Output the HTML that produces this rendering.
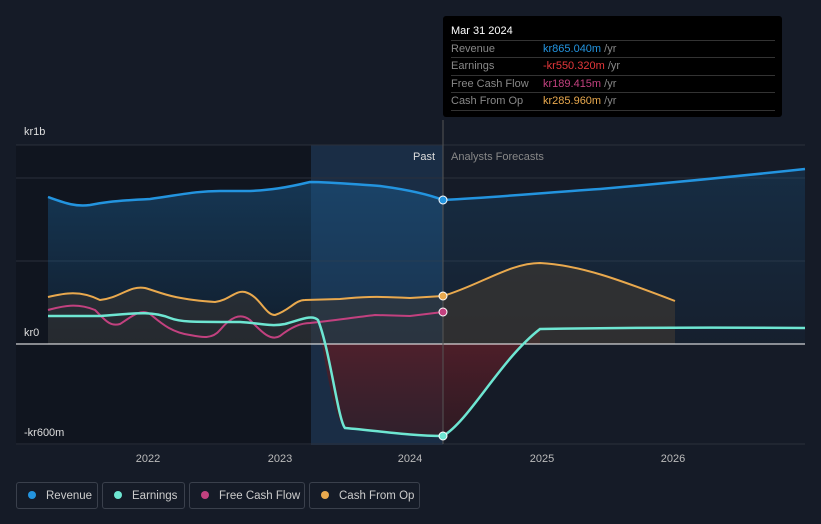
<!DOCTYPE html><html><head><style>
body{margin:0;background:#151b27;font-family:"Liberation Sans",sans-serif;width:821px;height:524px;overflow:hidden;position:relative}
.tip{position:absolute;left:443px;top:16px;width:339px;height:101px;background:#000;border-radius:3px}
.tip .h{color:#fff;font-size:11px;position:absolute;left:8px;top:9px}
.row{position:absolute;left:8px;width:324px;border-top:1px solid #333;height:17px;font-size:11px;color:#888;line-height:17px}
.row b{font-weight:normal;position:absolute;left:92px}
.leg{position:absolute;top:482px;height:27px;border:1px solid #3a404c;border-radius:3px;color:#ccc;font-size:11.5px;line-height:27px;box-sizing:border-box}
.leg i{display:inline-block;width:8px;height:8px;border-radius:50%;margin:0 10px 0 11px}
</style></head><body>
<svg width="821" height="524" style="position:absolute;left:0;top:0">
<defs><linearGradient id="rg" x1="0" y1="0" x2="0" y2="1"><stop offset="0" stop-color="#1b5a8c" stop-opacity=".8"/><stop offset="1" stop-color="#1b5a8c" stop-opacity=".2"/></linearGradient>
<linearGradient id="eg" x1="0" y1="0" x2="0" y2="1"><stop offset="0" stop-color="#5a1f2a" stop-opacity=".9"/><stop offset="1" stop-color="#3a1a22" stop-opacity=".7"/></linearGradient></defs>
<rect x="16" y="145" width="295" height="300" fill="#10151f"/>
<rect x="311" y="145" width="132" height="300" fill="#1a2d45"/>
<g stroke="#2a303b" stroke-width="1"><line x1="16" y1="145" x2="805" y2="145"/><line x1="16" y1="178" x2="805" y2="178"/><line x1="16" y1="261" x2="805" y2="261"/><line x1="16" y1="444" x2="805" y2="444"/></g>
<path d="M48,197 C65,203 75,207 90,205 C100,203 110,201 150,199 C180,195 195,191 220,191 L250,191 C270,190 285,188 310,182 C330,182 350,184 380,186 C410,190 430,195 443,200 L443,344 L48,344Z" fill="url(#rg)" opacity=".6"/>
<path d="M443,200 C500,197 540,193 600,189 C680,182 740,176 805,169 L805,344 L443,344Z" fill="url(#rg)" opacity=".35"/>
<path d="M320,330 C330,400 340,428 345,428 C380,431 410,436 443,436 C470,420 500,360 540,329 L540,344 L320,344Z" fill="url(#eg)"/>
<path d="M443,296 C480,285 510,263 540,263 C580,265 620,280 675,301 L675,344 L443,344Z" fill="#3a3632" opacity=".7"/>
<path d="M48,297 C65,293 80,290 100,300 C120,298 130,285 145,288 C160,292 170,299 215,302 C230,300 235,290 245,292 C260,296 265,315 275,315 C290,310 295,300 305,300 L340,299 C360,297 375,296 410,298 L443,296 L443,344 L48,344Z" fill="#3a3632" opacity=".5"/>
<line x1="16" y1="344" x2="805" y2="344" stroke="#fff" stroke-width="1"/>
<line x1="443" y1="120" x2="443" y2="444" stroke="#555" stroke-width="1"/>
<path d="M48,197 C65,203 75,207 90,205 C100,203 110,201 150,199 C180,195 195,191 220,191 L250,191 C270,190 285,188 310,182 C330,182 350,184 380,186 C410,190 430,195 443,200 C500,197 540,193 600,189 C680,182 740,176 805,169" fill="none" stroke="#2394df" stroke-width="2.5"/>
<path d="M48,297 C65,293 80,290 100,300 C120,298 130,285 145,288 C160,292 170,299 215,302 C230,300 235,290 245,292 C260,296 265,315 275,315 C290,310 295,300 305,300 L340,299 C360,297 375,296 410,298 L443,296 C480,285 510,263 540,263 C580,265 620,280 675,301" fill="none" stroke="#e9a94e" stroke-width="2"/>
<path d="M48,310 C60,307 75,302 95,310 C105,320 110,327 120,324 C130,318 140,308 150,314 C160,322 170,332 190,335 C200,337 212,340 220,330 C230,318 240,312 250,320 C260,330 270,342 280,336 C290,328 300,323 310,323 C330,321 350,318 375,315 L410,316 L443,312" fill="none" stroke="#c2417f" stroke-width="2"/>
<path d="M48,316 L100,316 C130,314 150,310 170,318 C180,322 190,322 240,322 C260,323 270,327 285,324 C300,320 312,314 318,320 C330,350 338,420 345,428 C380,431 410,436 443,436 C470,420 500,360 540,329 C600,328 680,327 805,328" fill="none" stroke="#6ee6d2" stroke-width="2.5"/>
<circle cx="443" cy="200" r="4" fill="#2394df" stroke="#fff"/>
<circle cx="443" cy="296" r="4" fill="#e9a94e" stroke="#fff"/>
<circle cx="443" cy="312" r="4" fill="#c2417f" stroke="#fff"/>
<circle cx="443" cy="436" r="4" fill="#6ee6d2" stroke="#fff"/>
<g font-size="11" fill="#ddd" font-family="Liberation Sans"><text x="24" y="135">kr1b</text><text x="24" y="336">kr0</text><text x="24" y="436">-kr600m</text>
<text x="435" y="160" text-anchor="end">Past</text><text x="451" y="160" fill="#888">Analysts Forecasts</text>
<g text-anchor="middle" fill="#bbb"><text x="148" y="462">2022</text><text x="280" y="462">2023</text><text x="410" y="462">2024</text><text x="542" y="462">2025</text><text x="673" y="462">2026</text></g></g>
</svg>
<div class="tip"><div class="h">Mar 31 2024</div>
<div class="row" style="top:24px">Revenue<b style="color:#2394df">kr865.040m <span style="color:#888">/yr</span></b></div>
<div class="row" style="top:41px">Earnings<b style="color:#e5383b">-kr550.320m <span style="color:#888">/yr</span></b></div>
<div class="row" style="top:59px">Free Cash Flow<b style="color:#c2417f">kr189.415m <span style="color:#888">/yr</span></b></div>
<div class="row" style="top:76px;border-bottom:1px solid #333">Cash From Op<b style="color:#e9a94e">kr285.960m <span style="color:#888">/yr</span></b></div></div>
<div class="leg" style="left:16px;width:82px"><i style="background:#2394df"></i>Revenue</div>
<div class="leg" style="left:102px;width:83px"><i style="background:#6ee6d2"></i>Earnings</div>
<div class="leg" style="left:189px;width:116px"><i style="background:#c2417f"></i>Free Cash Flow</div>
<div class="leg" style="left:309px;width:111px"><i style="background:#e9a94e"></i>Cash From Op</div>
</body></html>
